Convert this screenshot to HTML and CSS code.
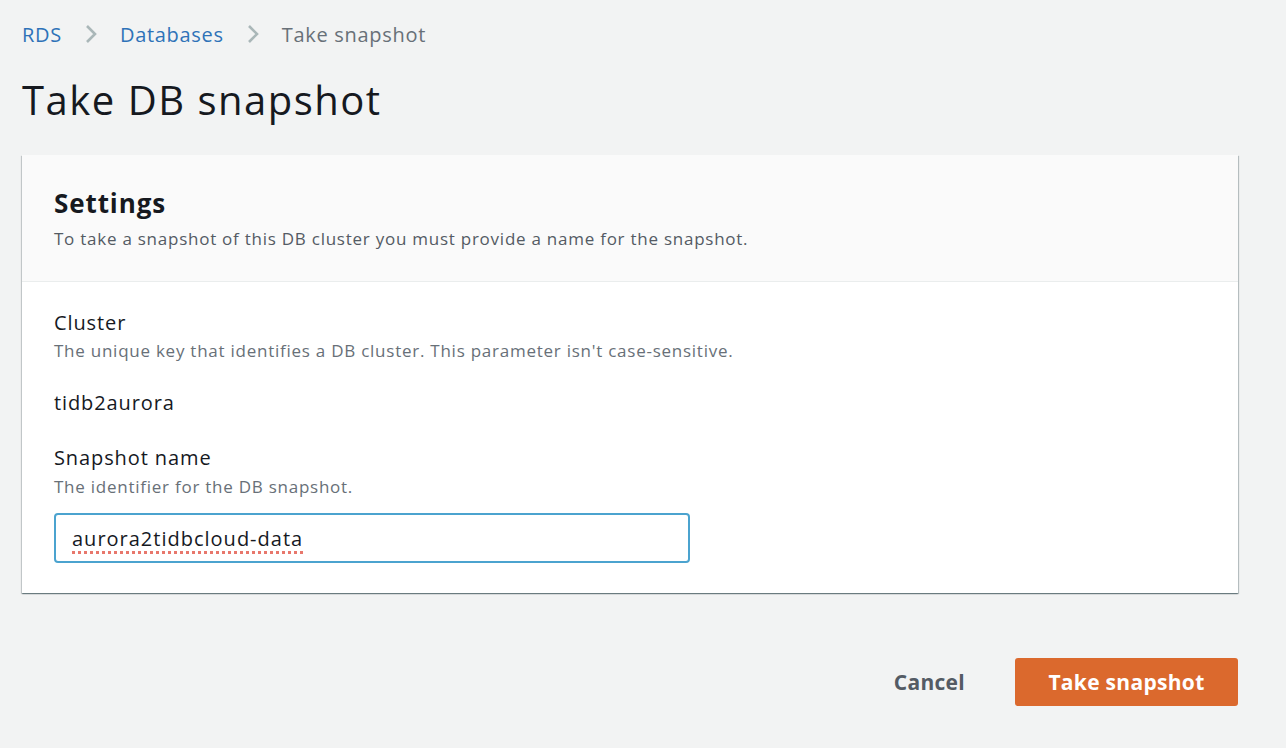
FILE: index.html
```html
<!DOCTYPE html>
<html lang="en">
<head>
<meta charset="utf-8">
<title>Take DB snapshot</title>
<link rel="stylesheet" href="styles.css">
</head>
<body>
<div class="page">
  <nav class="breadcrumb">
    <a class="crumb-link" href="#">RDS</a>
    <svg class="chev" width="14" height="22" viewBox="0 0 14 22"><path d="M3 3 L11 11 L3 19" fill="none" stroke="#aab7b8" stroke-width="2.6"/></svg>
    <a class="crumb-link" href="#">Databases</a>
    <svg class="chev" width="14" height="22" viewBox="0 0 14 22"><path d="M3 3 L11 11 L3 19" fill="none" stroke="#aab7b8" stroke-width="2.6"/></svg>
    <span class="crumb-current">Take snapshot</span>
  </nav>
  <h1 class="title">Take DB snapshot</h1>
  <section class="card">
    <header class="card-header">
      <h2 class="card-title">Settings</h2>
      <p class="card-desc">To take a snapshot of this DB cluster you must provide a name for the snapshot.</p>
    </header>
    <div class="card-body">
      <div class="label">Cluster</div>
      <div class="hint">The unique key that identifies a DB cluster. This parameter isn't case-sensitive.</div>
      <div class="value">tidb2aurora</div>
      <div class="label label-2">Snapshot name</div>
      <div class="hint">The identifier for the DB snapshot.</div>
      <div class="input"><span class="spell">aurora2tidbcloud-data</span></div>
    </div>
  </section>
  <div class="actions">
    <button class="btn-cancel">Cancel</button>
    <button class="btn-primary">Take snapshot</button>
  </div>
</div>
</body>
</html>
```

FILE: styles.css
```css
html, body {
  margin: 0;
  padding: 0;
  background: #f2f3f3;
}
body {
  font-family: "Open Sans", "Noto Sans", "Liberation Sans", sans-serif;
  color: #16191f;
}
.page {
  padding: 19px 48px 0 22px;
}
.breadcrumb {
  display: flex;
  align-items: center;
  height: 30px;
  font-size: 20px;
  letter-spacing: 0.7px;
  gap: 22px;
}
.crumb-link {
  color: #2e72b8;
  text-decoration: none;
}
.crumb-current {
  color: #687078;
}
.chev {
  display: block;
}
.title {
  margin: 27px 0 0;
  font-size: 40px;
  line-height: 48px;
  font-weight: 400;
  letter-spacing: 1.5px;
  color: #16191f;
}
.card {
  margin-top: 31px;
  background: #ffffff;
  box-shadow: 0 1px 1px 0 rgba(0, 28, 36, 0.35), 1px 1px 1px 0 rgba(0, 28, 36, 0.2), -1px 1px 1px 0 rgba(0, 28, 36, 0.15);
}
.card-header {
  background: #fafafa;
  border-bottom: 1px solid #eaeded;
  padding: 31px 32px 30px;
}
.card-title {
  margin: 0;
  font-size: 26px;
  line-height: 34px;
  font-weight: 700;
  letter-spacing: 0.9px;
}
.card-desc {
  margin: 7px 0 0;
  font-size: 17px;
  line-height: 24px;
  letter-spacing: 0.75px;
  color: #545b64;
}
.card-body {
  padding: 28px 32px 30px;
}
.label {
  font-size: 20px;
  line-height: 26px;
  letter-spacing: 0.9px;
  color: #16191f;
}
.label-2 {
  margin-top: 29px;
}
.hint {
  margin-top: 4px;
  font-size: 17px;
  line-height: 22px;
  letter-spacing: 0.75px;
  color: #687078;
}
.label-2 + .hint {
  margin-top: 5px;
}
.value {
  margin-top: 28px;
  font-size: 20px;
  line-height: 26px;
  letter-spacing: 0.9px;
}
.input {
  margin-top: 15px;
  width: 636px;
  height: 50px;
  box-sizing: border-box;
  border: 2px solid #4ba3cf;
  border-radius: 4px;
  background: #fff;
  display: flex;
  align-items: center;
  padding: 0 16px;
  font-size: 20px;
  letter-spacing: 1px;
}
.spell {
  text-decoration: underline dotted #e8776c;
  text-decoration-thickness: 2.5px;
  text-underline-offset: 5px;
}
.actions {
  margin-top: 65px;
  display: flex;
  justify-content: flex-end;
  align-items: center;
  gap: 30px;
}
.btn-cancel {
  background: none;
  border: none;
  font-family: inherit;
  font-size: 21px;
  font-weight: 700;
  letter-spacing: 0.3px;
  color: #545b64;
  padding: 0 20px;
  height: 48px;
}
.btn-primary {
  width: 223px;
  height: 48px;
  background: #db692d;
  border: none;
  border-radius: 3px;
  color: #ffffff;
  font-family: inherit;
  font-size: 21px;
  font-weight: 700;
  letter-spacing: 0.3px;
}
```
